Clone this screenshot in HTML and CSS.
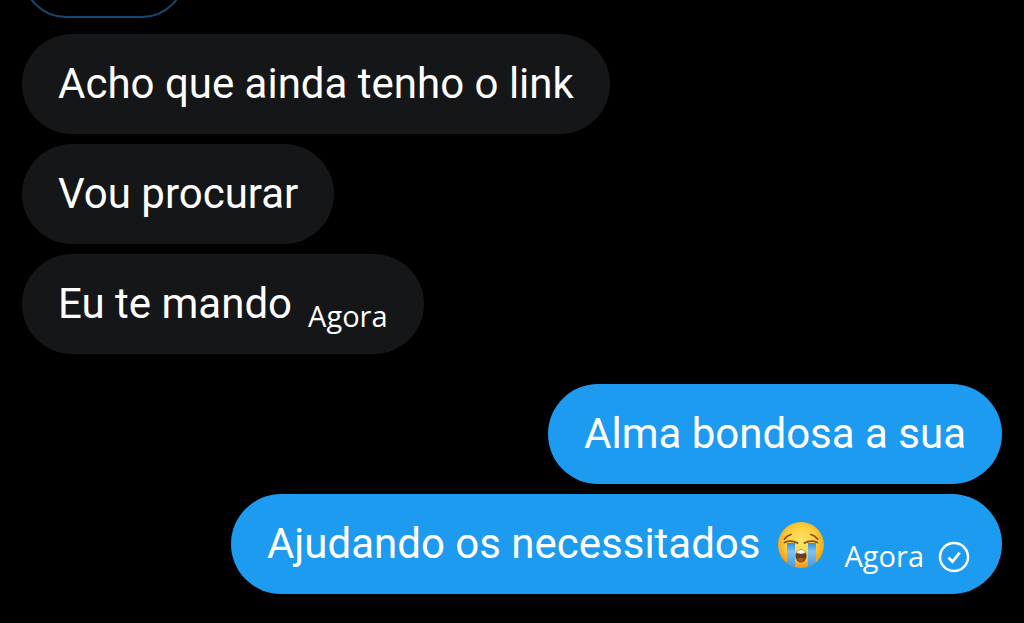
FILE: index.html
```html
<!DOCTYPE html>
<html lang="pt">
<head>
<meta charset="utf-8">
<meta name="viewport" content="width=device-width, initial-scale=1">
<title>Mensagens</title>
<link rel="stylesheet" href="styles.css">
</head>
<body>
<main class="chat">
  <div class="earlier"></div>
  <section class="group received">
    <div class="bubble"><p class="text">Acho que ainda tenho o link</p></div>
    <div class="bubble"><p class="text">Vou procurar</p></div>
    <div class="bubble"><p class="text">Eu te mando</p><time class="time">Agora</time></div>
  </section>
  <section class="group sent">
    <div class="bubble"><p class="text">Alma bondosa a sua</p></div>
    <div class="bubble with-status">
      <p class="text">Ajudando os necessitados</p>
      <svg class="emoji" viewBox="0 0 48 48" role="img" aria-label="Rosto chorando muito">
        <defs>
          <radialGradient id="face" cx="50%" cy="42%" r="58%">
            <stop offset="0" stop-color="#ffe56a"/>
            <stop offset=".6" stop-color="#fdcc3b"/>
            <stop offset="1" stop-color="#ee9712"/>
          </radialGradient>
          <linearGradient id="tear" x1="0" y1="0" x2="0" y2="1">
            <stop offset="0" stop-color="#2f8fe0"/>
            <stop offset=".35" stop-color="#7cc2f6"/>
            <stop offset="1" stop-color="#4496da"/>
          </linearGradient>
          <clipPath id="edge"><circle cx="24" cy="24" r="23"/></clipPath>
        </defs>
        <circle cx="24" cy="24" r="23" fill="url(#face)"/>
        <g clip-path="url(#edge)">
          <path d="M10 22h8v25h-8z" fill="url(#tear)"/>
          <path d="M31 22h8v25h-8z" fill="url(#tear)"/>
        </g>
        <g fill="none" stroke="#80501a" stroke-width="1.800" stroke-linecap="round">
          <path d="M7.500 18q2.500-3.500 6.500-4.500"/>
          <path d="M40.500 18q-2.500-3.500-6.500-4.500"/>
          <path d="M7.500 21.500q6.500-3 13 .5"/>
          <path d="M40.500 21.500q-6.500-3-13 .5"/>
        </g>
        <ellipse cx="24" cy="35" rx="5.500" ry="6.500" fill="#6b3b19"/>
        <path d="M20 32q0-3 4-3t4 3q-4 1.500-8 0z" fill="#fff"/>
        <path d="M20 38q4-3 8 0-1.500 3-4 3t-4-3z" fill="#a3562d"/>
      </svg>
      <time class="time">Agora</time>
      <svg class="status" viewBox="0 0 32 32" role="img" aria-label="Enviada">
        <circle cx="16" cy="16" r="14" fill="none" stroke="#fff" stroke-width="2.500"/>
        <path d="M10.500 16.500l4 4.200 7.200-9" fill="none" stroke="#fff" stroke-width="2.800"/>
      </svg>
    </div>
  </section>
</main>
</body>
</html>
```
FILE: styles.css
```css
body {
  margin: 0;
  background: #000;
  color: #fff;
  font-family: Roboto, "Open Sans", sans-serif;
}

.chat {
  display: flex;
  flex-direction: column;
  padding: 0 22px 28px;
  overflow: hidden;
}

.earlier {
  box-sizing: border-box;
  width: 164px;
  height: 88px;
  margin: -70px 0 16px;
  border: 2px solid #124a75;
  border-radius: 44px;
}

.group {
  display: flex;
  flex-direction: column;
  align-items: flex-start;
  gap: 10px;
}

.sent {
  align-items: flex-end;
  margin-top: 30px;
}

.bubble {
  display: flex;
  align-items: flex-end;
  padding: 20px 36px;
  border-radius: 50px;
  background: #151618;
}

.sent .bubble {
  background: #1d9bf0;
}

.sent .with-status {
  padding-right: 32px;
}

.text {
  margin: 0;
  font-size: 42px;
  line-height: 60px;
}

.time {
  margin-left: 16px;
  margin-bottom: 1px;
  font-family: "Open Sans", sans-serif;
  font-size: 29px;
  line-height: 34px;
}

.emoji {
  width: 48px;
  height: 48px;
  margin-left: 16px;
  margin-bottom: 5px;
}

.emoji + .time {
  margin-left: 20px;
}

.status {
  width: 32px;
  height: 32px;
  margin-left: 14px;
  margin-bottom: 1px;
}
```
